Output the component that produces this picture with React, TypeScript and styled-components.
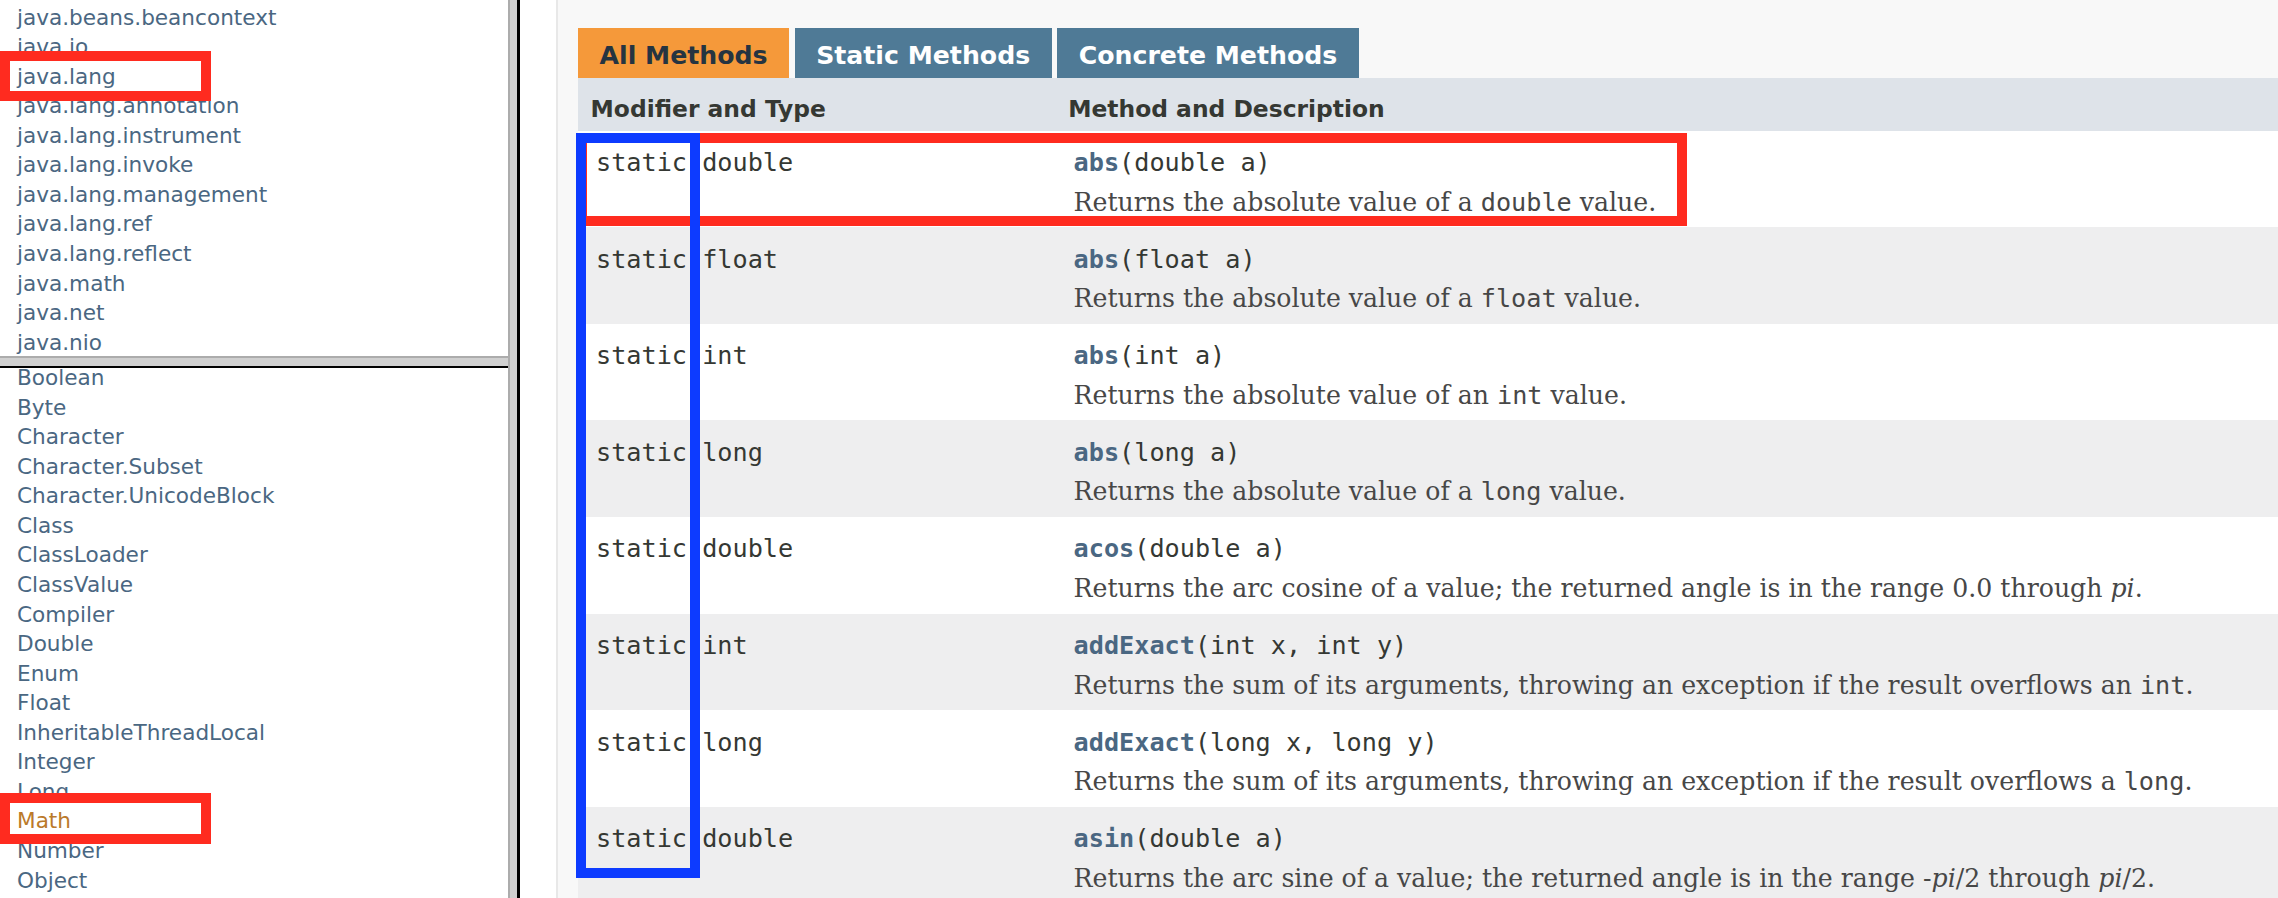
import React from 'react';
import styled, { createGlobalStyle } from 'styled-components';

const GlobalStyle = createGlobalStyle`
  html, body { margin: 0; padding: 0; background: #ffffff; }
  body {
    width: 2278px;
    height: 898px;
    overflow: hidden;
    font-family: 'DejaVu Sans', sans-serif;
    color: #353833;
  }
`;

const Page = styled.div`
  position: relative;
  display: flex;
  width: 2278px;
  height: 898px;
  overflow: hidden;
`;

const Sidebar = styled.aside`
  flex: none;
  width: 508px;
  height: 100%;
  display: flex;
  flex-direction: column;
  background: #ffffff;
`;

const Frame = styled.div<{ $fixed?: number }>`
  overflow: hidden;
  ${(p) => (p.$fixed ? `height: ${p.$fixed}px; flex: none;` : 'flex: 1; min-height: 0;')}
`;

const LinkList = styled.ul<{ $offset: number }>`
  list-style: none;
  margin: ${(p) => p.$offset}px 0 0 0;
  padding: 0 0 0 17px;
`;

const LinkItem = styled.li<{ $active?: boolean }>`
  font-family: 'DejaVu Sans', sans-serif;
  font-size: 21.6px;
  line-height: 29.57px;
  height: 29.57px;
  white-space: nowrap;
  color: ${(p) => (p.$active ? '#bb7a2a' : '#4a6782')};
`;

const HDivider = styled.div`
  flex: none;
  height: 12px;
  box-sizing: border-box;
  border-top: 2px solid #acacac;
  border-bottom: 2px solid #000000;
  background: #d0d0d0;
`;

const VDivider = styled.div`
  flex: none;
  width: 12px;
  height: 100%;
  box-sizing: border-box;
  border-left: 2px solid #acacac;
  border-right: 3px solid #000000;
  background: #d0d0d0;
`;

const Main = styled.main`
  flex: 1;
  min-width: 0;
  display: flex;
  background: #ffffff;
  padding-left: 36px;
`;

const Content = styled.div`
  flex: 1;
  min-width: 0;
  display: flex;
  flex-direction: column;
  background: #f8f8f8;
  border-left: 2px solid #e8e8e8;
  padding: 28px 0 0 20px;
`;

const Tabs = styled.div`
  display: flex;
  flex: none;
  gap: 5.4px;
`;

const Tab = styled.span<{ $active?: boolean }>`
  font-family: 'DejaVu Sans', sans-serif;
  font-weight: bold;
  font-size: 25.2px;
  line-height: 29.3px;
  padding: 12.6px 21.6px 8.5px;
  white-space: pre;
  background: ${(p) => (p.$active ? '#f5993a' : '#4f7a96')};
  color: ${(p) => (p.$active ? '#253441' : '#ffffff')};
`;

const HeaderRow = styled.div`
  display: grid;
  flex: none;
  grid-template-columns: 477.6px 1fr;
  box-sizing: border-box;
  height: 52.3px;
  background: #dee3e9;
`;

const HeaderCell = styled.div`
  font-family: 'DejaVu Sans', sans-serif;
  font-weight: bold;
  font-size: 23.4px;
  padding: 17px 5px 0 12.6px;
  white-space: nowrap;
  color: #353833;
`;

const Row = styled.div<{ $alt: boolean }>`
  display: grid;
  flex: none;
  grid-template-columns: 477.6px 1fr;
  box-sizing: border-box;
  height: 96.6px;
  background: ${(p) => (p.$alt ? '#eeeeef' : '#ffffff')};
`;

const Cell = styled.div`
  padding: 14.4px 0 0 18px;
  white-space: nowrap;
`;

const CodeLine = styled.div`
  font-family: 'DejaVu Sans Mono', monospace;
  font-size: 25.2px;
  line-height: 35.3px;
  color: #353833;
`;

const MethodName = styled.span`
  font-weight: bold;
  color: #4a6782;
`;

const Description = styled.div`
  font-family: 'DejaVu Serif', serif;
  font-size: 25.2px;
  line-height: 35.3px;
  margin-top: 4.2px;
  color: #474747;
`;

const InlineCode = styled.code`
  font-family: 'DejaVu Sans Mono', monospace;
  font-size: 25.2px;
`;

const Mark = styled.div<{ $color: string; $x: number; $y: number; $w: number; $h: number }>`
  position: absolute;
  box-sizing: border-box;
  left: ${(p) => p.$x}px;
  top: ${(p) => p.$y}px;
  width: ${(p) => p.$w}px;
  height: ${(p) => p.$h}px;
  border: 10px solid ${(p) => p.$color};
  pointer-events: none;
`;

const packages = [
  'java.beans.beancontext',
  'java.io',
  'java.lang',
  'java.lang.annotation',
  'java.lang.instrument',
  'java.lang.invoke',
  'java.lang.management',
  'java.lang.ref',
  'java.lang.reflect',
  'java.math',
  'java.net',
  'java.nio',
  'java.nio.channels',
];

const classes = [
  'Boolean',
  'Byte',
  'Character',
  'Character.Subset',
  'Character.UnicodeBlock',
  'Class',
  'ClassLoader',
  'ClassValue',
  'Compiler',
  'Double',
  'Enum',
  'Float',
  'InheritableThreadLocal',
  'Integer',
  'Long',
  'Math',
  'Number',
  'Object',
  'Package',
];

type Method = {
  type: string;
  name: string;
  params: string;
  desc: React.ReactNode;
};

const methods: Method[] = [
  {
    type: 'static double',
    name: 'abs',
    params: '(double a)',
    desc: (
      <>
        Returns the absolute value of a <InlineCode>double</InlineCode> value.
      </>
    ),
  },
  {
    type: 'static float',
    name: 'abs',
    params: '(float a)',
    desc: (
      <>
        Returns the absolute value of a <InlineCode>float</InlineCode> value.
      </>
    ),
  },
  {
    type: 'static int',
    name: 'abs',
    params: '(int a)',
    desc: (
      <>
        Returns the absolute value of an <InlineCode>int</InlineCode> value.
      </>
    ),
  },
  {
    type: 'static long',
    name: 'abs',
    params: '(long a)',
    desc: (
      <>
        Returns the absolute value of a <InlineCode>long</InlineCode> value.
      </>
    ),
  },
  {
    type: 'static double',
    name: 'acos',
    params: '(double a)',
    desc: (
      <>
        Returns the arc cosine of a value; the returned angle is in the range 0.0 through <i>pi</i>.
      </>
    ),
  },
  {
    type: 'static int',
    name: 'addExact',
    params: '(int x, int y)',
    desc: (
      <>
        Returns the sum of its arguments, throwing an exception if the result overflows an{' '}
        <InlineCode>int</InlineCode>.
      </>
    ),
  },
  {
    type: 'static long',
    name: 'addExact',
    params: '(long x, long y)',
    desc: (
      <>
        Returns the sum of its arguments, throwing an exception if the result overflows a{' '}
        <InlineCode>long</InlineCode>.
      </>
    ),
  },
  {
    type: 'static double',
    name: 'asin',
    params: '(double a)',
    desc: (
      <>
        Returns the arc sine of a value; the returned angle is in the range -<i>pi</i>/2 through{' '}
        <i>pi</i>/2.
      </>
    ),
  },
];

export default function App() {
  return (
    <>
      <GlobalStyle />
      <Page>
        <Sidebar>
          <Frame $fixed={356}>
            <LinkList $offset={2.5}>
              {packages.map((p) => (
                <LinkItem key={p}>{p}</LinkItem>
              ))}
            </LinkList>
          </Frame>
          <HDivider />
          <Frame>
            <LinkList $offset={-5}>
              {classes.map((c) => (
                <LinkItem key={c} $active={c === 'Math'}>
                  {c}
                </LinkItem>
              ))}
            </LinkList>
          </Frame>
        </Sidebar>
        <VDivider />
        <Main>
          <Content>
            <Tabs>
              <Tab $active>All Methods</Tab>
              <Tab>Static Methods</Tab>
              <Tab>Concrete Methods</Tab>
            </Tabs>
            <HeaderRow>
              <HeaderCell>Modifier and Type</HeaderCell>
              <HeaderCell>Method and Description</HeaderCell>
            </HeaderRow>
            {methods.map((m, i) => (
              <Row key={i} $alt={i % 2 === 1}>
                <Cell>
                  <CodeLine>{m.type}</CodeLine>
                </Cell>
                <Cell>
                  <CodeLine>
                    <MethodName>{m.name}</MethodName>
                    {m.params}
                  </CodeLine>
                  <Description>{m.desc}</Description>
                </Cell>
              </Row>
            ))}
          </Content>
        </Main>
        <Mark $color="#ff2b1f" $x={0} $y={51} $w={211} $h={50} />
        <Mark $color="#ff2b1f" $x={0} $y={793} $w={211} $h={51} />
        <Mark $color="#ff2b1f" $x={577} $y={133} $w={1110} $h={93} />
        <Mark $color="#0d3bff" $x={576} $y={133} $w={124} $h={745} />
      </Page>
    </>
  );
}
